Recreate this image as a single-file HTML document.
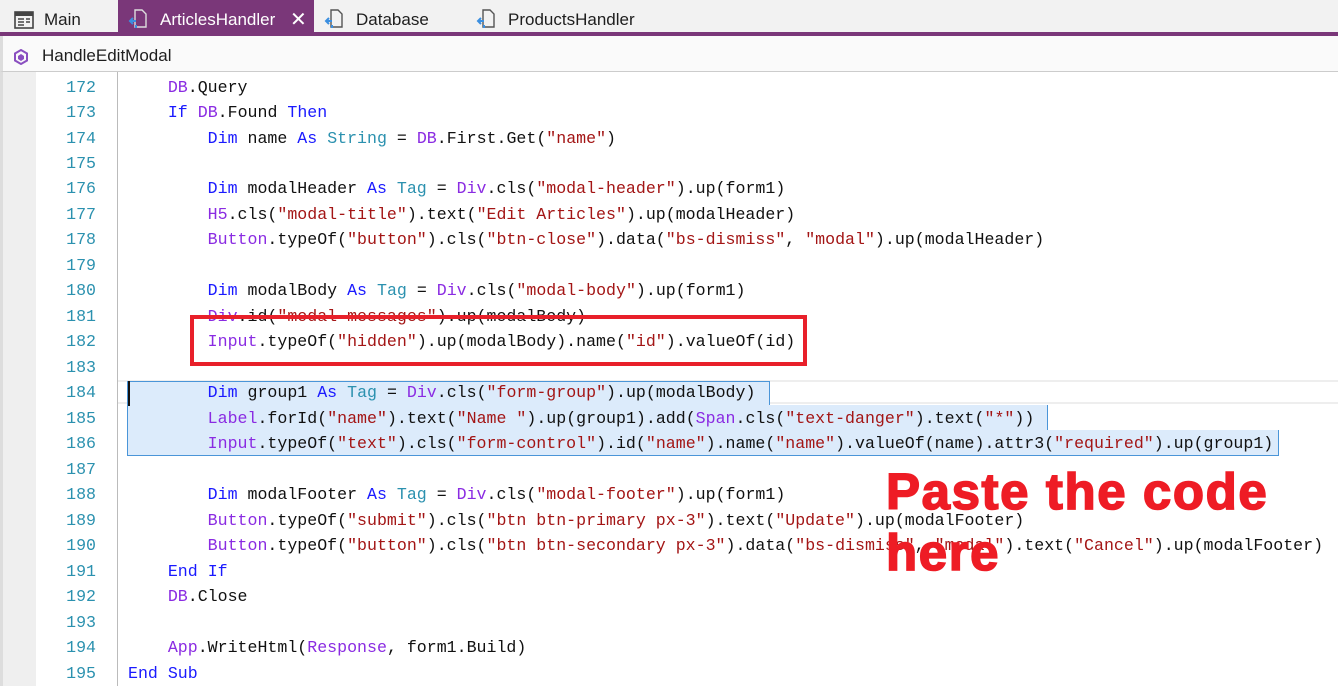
<!DOCTYPE html>
<html><head><meta charset="utf-8"><style>
*{margin:0;padding:0;box-sizing:border-box}
body{width:1338px;height:686px;overflow:hidden;background:#fff;font-family:"Liberation Sans",sans-serif;position:relative}
.tabs{position:absolute;left:0;top:0;width:1338px;height:33px;background:#f2f2f2}
.tab{position:absolute;top:0;height:33px;font-size:17px;line-height:40px;color:#1e1e1e}
.tab span{position:absolute;top:0;line-height:40px;white-space:nowrap}
.act{background:#7a3779;color:#fff}
.purple{position:absolute;left:0;top:32px;width:1338px;height:4px;background:#7a3779}
.bc{position:absolute;left:0;top:36px;width:1338px;height:36px;background:#fafafa;border-left:3px solid #ddd;border-bottom:1px solid #ccc;font-size:17px;line-height:40px;color:#1e1e1e}
.gut{position:absolute;left:0;top:72px;width:36px;height:614px;background:#efefef;border-left:3px solid #ddd}
.sep{position:absolute;left:117px;top:72px;width:1px;height:614px;background:#bbb}
.ln{position:absolute;left:40px;width:56px;text-align:right;color:#2b91af;font:16.6px "Liberation Mono",monospace;line-height:25.5px;height:25.5px}
.cd{position:absolute;left:128px;white-space:pre;font:16.6px "Liberation Mono",monospace;line-height:25.5px;height:25.5px;color:#111}
.k{color:#1a1aff}.t{color:#2b91af}.c{color:#8a2be2}.s{color:#a31515}
.sel{position:absolute;background:#dcebfb;border:1.5px solid #4a95d8}
</style></head><body>
<div class="tabs">
 <div class="tab" style="left:12px;width:100px"><svg width="20" height="18" style="position:absolute;left:2px;top:11px" viewBox="0 0 20 18"><rect x="1" y="1" width="18" height="16" fill="none" stroke="#444" stroke-width="1.6"/><rect x="1" y="1" width="18" height="4" fill="#444"/><path d="M4 8h6M12 8h4M4 11h6M12 11h4M4 14h6" stroke="#444" stroke-width="1.4"/></svg><span style="left:32px">Main</span></div>
 <div class="tab act" style="left:118px;width:196px;top:0"><svg width="20" height="22" style="position:absolute;left:10px;top:8px" viewBox="0 0 20 22"><path d="M7 2h7l4 4v13H7z" fill="none" stroke="#ddd" stroke-width="1.4"/><path d="M2 13h6M5 10l-3 3 3 3M8 17v3" stroke="#3b8fe0" stroke-width="2" fill="none"/></svg><span style="left:42px">ArticlesHandler</span><span style="left:172px;font-size:20px">✕</span></div>
 <div class="tab" style="left:322px;width:140px"><svg width="20" height="22" style="position:absolute;left:2px;top:8px" viewBox="0 0 20 22"><path d="M7 2h7l4 4v13H7z" fill="none" stroke="#555" stroke-width="1.4"/><path d="M2 13h6M5 10l-3 3 3 3M8 17v3" stroke="#3b8fe0" stroke-width="2" fill="none"/></svg><span style="left:34px">Database</span></div>
 <div class="tab" style="left:474px;width:200px"><svg width="20" height="22" style="position:absolute;left:2px;top:8px" viewBox="0 0 20 22"><path d="M7 2h7l4 4v13H7z" fill="none" stroke="#555" stroke-width="1.4"/><path d="M2 13h6M5 10l-3 3 3 3M8 17v3" stroke="#3b8fe0" stroke-width="2" fill="none"/></svg><span style="left:34px">ProductsHandler</span></div>
</div>
<div class="purple"></div>
<div class="bc"><svg width="16" height="16" style="position:absolute;left:10px;top:13px" viewBox="0 0 16 16"><path d="M8 1l6 3.5v7L8 15l-6-3.5v-7z" fill="none" stroke="#8a4fc0" stroke-width="2"/><path d="M8 5l3 2v3l-3 2-3-2V7z" fill="#8a4fc0"/></svg><span style="position:absolute;left:39px;top:0">HandleEditModal</span></div>
<div class="gut"></div>
<div class="sep"></div>
<div style="position:absolute;left:118px;top:380px;width:1220px;height:24px;border-top:2px solid #eee;border-bottom:2px solid #eee"></div>
<div class="sel" style="left:127px;top:381px;width:643px;height:25px"></div>
<div class="sel" style="left:127px;top:405px;width:921px;height:26px;border-top:none"></div>
<div class="sel" style="left:127px;top:430px;width:1152px;height:26px;border-top:none"></div>
<div style="position:absolute;left:128px;top:381px;width:0;height:25px;border-left:2px solid #111"></div>
<div id="code"></div>
<div style="position:absolute;left:190px;top:315px;width:617px;height:51px;border:4px solid #e8202a"></div>
<div style="position:absolute;left:886px;top:461px;font:bold 51px 'Liberation Sans',sans-serif;color:#ee1c25;line-height:61px;letter-spacing:1.6px;-webkit-text-stroke:1.6px #ee1c25;white-space:nowrap">Paste the code<br>here</div>
<script>
const L=[
['    ','<span class=c>DB</span>.Query'],
['    ','<span class=k>If</span> <span class=c>DB</span>.Found <span class=k>Then</span>'],
['        ','<span class=k>Dim</span> name <span class=k>As</span> <span class=t>String</span> = <span class=c>DB</span>.First.Get(<span class=s>"name"</span>)'],
['',''],
['        ','<span class=k>Dim</span> modalHeader <span class=k>As</span> <span class=t>Tag</span> = <span class=c>Div</span>.cls(<span class=s>"modal-header"</span>).up(form1)'],
['        ','<span class=c>H5</span>.cls(<span class=s>"modal-title"</span>).text(<span class=s>"Edit Articles"</span>).up(modalHeader)'],
['        ','<span class=c>Button</span>.typeOf(<span class=s>"button"</span>).cls(<span class=s>"btn-close"</span>).data(<span class=s>"bs-dismiss"</span>, <span class=s>"modal"</span>).up(modalHeader)'],
['',''],
['        ','<span class=k>Dim</span> modalBody <span class=k>As</span> <span class=t>Tag</span> = <span class=c>Div</span>.cls(<span class=s>"modal-body"</span>).up(form1)'],
['        ','<span class=c>Div</span>.id(<span class=s>"modal-messages"</span>).up(modalBody)'],
['        ','<span class=c>Input</span>.typeOf(<span class=s>"hidden"</span>).up(modalBody).name(<span class=s>"id"</span>).valueOf(id)'],
['',''],
['        ','<span class=k>Dim</span> group1 <span class=k>As</span> <span class=t>Tag</span> = <span class=c>Div</span>.cls(<span class=s>"form-group"</span>).up(modalBody)'],
['        ','<span class=c>Label</span>.forId(<span class=s>"name"</span>).text(<span class=s>"Name "</span>).up(group1).add(<span class=c>Span</span>.cls(<span class=s>"text-danger"</span>).text(<span class=s>"*"</span>))'],
['        ','<span class=c>Input</span>.typeOf(<span class=s>"text"</span>).cls(<span class=s>"form-control"</span>).id(<span class=s>"name"</span>).name(<span class=s>"name"</span>).valueOf(name).attr3(<span class=s>"required"</span>).up(group1)'],
['',''],
['        ','<span class=k>Dim</span> modalFooter <span class=k>As</span> <span class=t>Tag</span> = <span class=c>Div</span>.cls(<span class=s>"modal-footer"</span>).up(form1)'],
['        ','<span class=c>Button</span>.typeOf(<span class=s>"submit"</span>).cls(<span class=s>"btn btn-primary px-3"</span>).text(<span class=s>"Update"</span>).up(modalFooter)'],
['        ','<span class=c>Button</span>.typeOf(<span class=s>"button"</span>).cls(<span class=s>"btn btn-secondary px-3"</span>).data(<span class=s>"bs-dismiss"</span>, <span class=s>"modal"</span>).text(<span class=s>"Cancel"</span>).up(modalFooter)'],
['    ','<span class=k>End</span> <span class=k>If</span>'],
['    ','<span class=c>DB</span>.Close'],
['',''],
['    ','<span class=c>App</span>.WriteHtml(<span class=c>Response</span>, form1.Build)'],
['','<span class=k>End</span> <span class=k>Sub</span>']];
let h='';
L.forEach((l,i)=>{const t=(74.5+i*25.48).toFixed(1);
h+=`<div class="ln" style="top:${t}px">${172+i}</div><div class="cd" style="top:${t}px">${l[0]}${l[1]}</div>`;});
document.getElementById('code').innerHTML=h;
</script>
</body></html>
